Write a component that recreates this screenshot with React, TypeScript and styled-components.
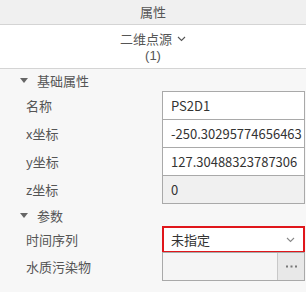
import * as React from "react";
import styled, { createGlobalStyle } from "styled-components";

const GlobalStyle = createGlobalStyle`
  html, body {
    margin: 0;
    padding: 0;
    background: #f7f7f7;
  }
  body {
    font-family: "Noto Sans CJK SC", "Noto Sans", sans-serif;
    font-size: 13px;
    color: #555;
  }
`;

const SPanel = styled.div`
  width: 306px;
  height: 292px;
  overflow: hidden;
  background: #f7f7f7;
`;

const SHeader = styled.div`
  height: 24px;
  line-height: 24px;
  text-align: center;
  background: #f0f0f0;
  border-bottom: 1px solid #d4d4d4;
  color: #555;
`;

const STypeBox = styled.div`
  height: 44px;
  padding-top: 5px;
  box-sizing: border-box;
  background: #fff;
  border-bottom: 1px solid #d4d4d4;
  color: #555;
  display: flex;
  flex-direction: column;
  align-items: center;
`;

const STypeName = styled.div`
  height: 17px;
  line-height: 17px;
  display: flex;
  align-items: center;
  gap: 5px;
`;

const STypeCount = styled.div`
  height: 17px;
  line-height: 17px;
  font-family: "Liberation Sans", "Noto Sans", sans-serif;
`;

const SGroupHeader = styled.div`
  height: 22px;
  display: flex;
  align-items: center;
  padding-left: 20px;
  gap: 9px;
  color: #555;
`;

const SCaret = styled.span`
  width: 0;
  height: 0;
  border-left: 4px solid transparent;
  border-right: 4px solid transparent;
  border-top: 5px solid #666;
`;

const SRows = styled.div`
  display: flex;
  flex-direction: column;
`;

const SRow = styled.div`
  display: grid;
  grid-template-columns: 162px 143px;
  align-items: center;
  & + & {
    margin-top: -1px;
  }
`;

const SLabel = styled.div`
  padding-left: 26px;
  color: #555;
`;

const SField = styled.div<{ $disabled?: boolean }>`
  height: 29px;
  box-sizing: border-box;
  border: 1px solid #a9a9a9;
  background: ${(p) => (p.$disabled ? "#f0f0f0" : "#fff")};
  color: #333;
  padding-left: 8px;
  display: flex;
  align-items: center;
  white-space: nowrap;
  overflow: hidden;
`;

const SSelect = styled.div`
  height: 27px;
  box-sizing: border-box;
  border: 2px solid #e0161b;
  background: #fff;
  color: #333;
  padding: 0 8px 0 7px;
  display: flex;
  align-items: center;
  justify-content: space-between;
`;

const SPicker = styled.div`
  height: 29px;
  box-sizing: border-box;
  border: 1px solid #a9a9a9;
  background: #f5f5f5;
  display: flex;
`;

const SPickerText = styled.div`
  flex: 1;
`;

const SPickerButton = styled.div`
  flex: 0 0 26px;
  border-left: 1px solid #c8c8c8;
  background: #e8e8e8;
  display: flex;
  align-items: center;
  justify-content: center;
`;

const Chevron = ({ color = "#555" }: { color?: string }) => (
  <svg width="9" height="6" viewBox="0 0 9 6">
    <path d="M1 1 L4.5 4.5 L8 1" fill="none" stroke={color} strokeWidth="1.1" />
  </svg>
);

const Dots = () => (
  <svg width="11" height="3" viewBox="0 0 11 3">
    <rect x="0" y="0.5" width="2" height="2" fill="#777" />
    <rect x="4.5" y="0.5" width="2" height="2" fill="#777" />
    <rect x="9" y="0.5" width="2" height="2" fill="#777" />
  </svg>
);

const basics = [
  { label: "名称", value: "PS2D1" },
  { label: "x坐标", value: "-250.30295774656463" },
  { label: "y坐标", value: "127.30488323787306" },
  { label: "z坐标", value: "0", disabled: true },
];

const App = () => (
  <SPanel>
    <GlobalStyle />
    <SHeader>属性</SHeader>
    <STypeBox>
      <STypeName>
        二维点源 <Chevron />
      </STypeName>
      <STypeCount>(1)</STypeCount>
    </STypeBox>
    <SGroupHeader>
      <SCaret />
      基础属性
    </SGroupHeader>
    <SRows>
      {basics.map((b) => (
        <SRow key={b.label}>
          <SLabel>{b.label}</SLabel>
          <SField $disabled={b.disabled}>{b.value}</SField>
        </SRow>
      ))}
    </SRows>
    <SGroupHeader>
      <SCaret />
      参数
    </SGroupHeader>
    <SRows>
      <SRow>
        <SLabel>时间序列</SLabel>
        <SSelect>
          未指定 <Chevron color="#888" />
        </SSelect>
      </SRow>
      <SRow>
        <SLabel>水质污染物</SLabel>
        <SPicker>
          <SPickerText />
          <SPickerButton>
            <Dots />
          </SPickerButton>
        </SPicker>
      </SRow>
    </SRows>
  </SPanel>
);

export default App;
